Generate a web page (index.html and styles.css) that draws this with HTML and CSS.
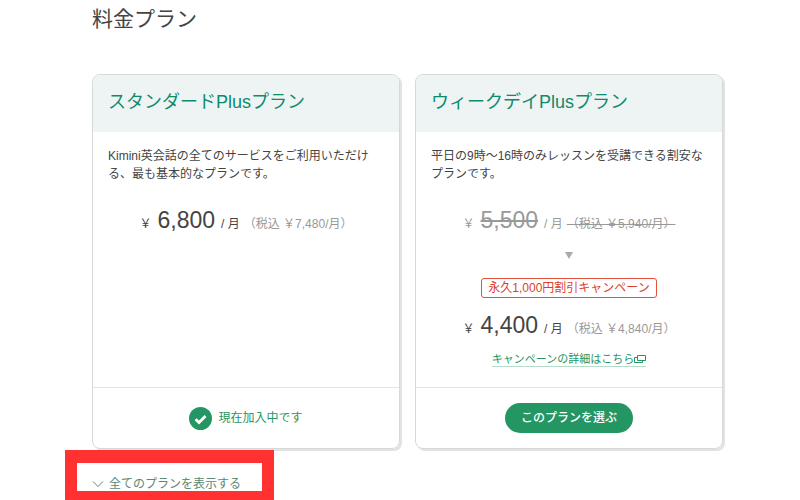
FILE: index.html
```
<!DOCTYPE html>
<html lang="ja">
<head>
    <meta charset="UTF-8">
    <meta name="viewport" content="width=device-width, initial-scale=1.0">
    <title>料金プラン</title>
    <link rel="stylesheet" href="styles.css">
</head>
<body>

<main class="page">
    <h1 class="page-title">料金プラン</h1>

    <div class="plans">
        <!-- Standard Plus -->
        <section class="plan">
            <h2 class="plan-name">スタンダードPlusプラン</h2>
            <div class="plan-body">
                <p class="plan-text">Kimini英会話の全てのサービスをご利用いただける、最も基本的なプランです。</p>
                <p class="price"><span class="yen">￥</span><span class="amount">6,800</span><span class="unit">/ 月</span><span class="tax">（税込 ￥7,480/月）</span></p>
            </div>
            <div class="plan-footer">
                <svg class="check-icon" viewBox="0 0 23 23" aria-hidden="true">
                    <circle cx="11.5" cy="11.5" r="11.5" fill="#249663"/>
                    <path d="M6.6 12.2l3.4 3.3 6.5-6.5" fill="none" stroke="#fff" stroke-width="2.8"/>
                </svg>
                <span class="current">現在加入中です</span>
            </div>
        </section>

        <!-- Weekday Plus -->
        <section class="plan">
            <h2 class="plan-name">ウィークデイPlusプラン</h2>
            <div class="plan-body">
                <p class="plan-text">平日の9時〜16時のみレッスンを受講できる割安なプランです。</p>
                <p class="price price-old"><span class="yen">￥</span><s class="amount">5,500</s><span class="unit">/ 月</span><s class="tax">（税込 ￥5,940/月）</s></p>
                <div class="arrow"></div>
                <p class="campaign">永久1,000円割引キャンペーン</p>
                <p class="price"><span class="yen">￥</span><span class="amount">4,400</span><span class="unit">/ 月</span><span class="tax">（税込 ￥4,840/月）</span></p>
                <a class="detail-link" href="#">キャンペーンの詳細はこちら<svg class="window-icon" viewBox="0 0 12 10" aria-hidden="true">
                        <path d="M3.5 1.5h8v5h-8zM3.5 3.5h-3v5h8v-2" fill="none" stroke="#249663"/>
                    </svg></a>
            </div>
            <div class="plan-footer">
                <button class="select-btn" type="button">このプランを選ぶ</button>
            </div>
        </section>
    </div>

    <div class="show-all">
        <button class="show-all-btn" type="button">
            <svg class="chevron-icon" viewBox="0 0 12 8" aria-hidden="true">
                <path d="M1 1.5l5 5 5-5" fill="none" stroke="#5d8874"/>
            </svg>
            全てのプランを表示する
        </button>
        <div class="highlight"></div>
    </div>
</main>

</body>
</html>
```
FILE: styles.css
```
/* Global Styling */
* {
    box-sizing: border-box;
}

body {
    margin: 0;
    background-color: #fff;
    color: #444;
    font-family: "Liberation Sans", "Noto Sans CJK JP", sans-serif;
    font-size: 12px;
    line-height: 18px;
}

h1, h2, p {
    margin: 0;
    font-weight: normal;
}

button {
    border: none;
    font-family: inherit;
    font-size: 12px;
    line-height: 18px;
    cursor: pointer;
}

.page {
    padding: 4px 77px 7px 92px;
}

.page-title {
    margin-bottom: 40px;
    font-size: 21px;
    line-height: 30px;
}

/* Plan Cards */
.plans {
    display: grid;
    grid-template-columns: 1fr 1fr;
    gap: 15px;
}

.plan {
    display: flex;
    flex-direction: column;
    border: 1px solid #d5dad8;
    border-radius: 8px;
    box-shadow: 2px 2px 0 #e2e2e2;
    overflow: hidden;
}

.plan-name {
    padding: 12px 15px 15px;
    background-color: #eef4f4;
    color: #0f8a6c;
    font-size: 18px;
    line-height: 30px;
}

.plan-body {
    flex: 1;
    display: flex;
    flex-direction: column;
    align-items: center;
    padding: 15px 15px 20px;
}

.plan-text {
    width: 100%;
    margin-bottom: 22px;
}

/* Prices */
.price {
    display: flex;
    align-items: baseline;
    line-height: 30px;
    white-space: nowrap;
}

.amount {
    margin: 0 6px;
    font-size: 23px;
    text-decoration-thickness: 2px;
}

.unit {
    margin-right: 4px;
}

.tax {
    color: #999;
}

.price-old {
    color: #999;
}

.arrow {
    width: 0;
    margin: 13px 0 19px;
    border: 4px solid transparent;
    border-top: 7px solid #aaa;
    border-bottom: none;
}

.campaign {
    margin-bottom: 12px;
    padding: 0 6px;
    border: 1px solid #e0503c;
    border-radius: 3px;
    color: #dc3f28;
}

.detail-link {
    display: flex;
    align-items: center;
    margin-top: 8px;
    border-bottom: 1px solid #b5dccb;
    color: #249663;
    font-size: 11px;
    line-height: 14px;
    text-decoration: none;
}

.window-icon {
    width: 12px;
    height: 10px;
}

/* Card Footer */
.plan-footer {
    display: flex;
    justify-content: center;
    align-items: center;
    gap: 6px;
    height: 61px;
    border-top: 1px solid #e2e6e4;
    color: #249663;
}

.check-icon {
    width: 23px;
    height: 23px;
}

.select-btn {
    padding: 6px 16px;
    border-radius: 15px;
    background-color: #249663;
    color: #fff;
    font-weight: 500;
}

/* Show All */
.show-all {
    position: relative;
    display: flex;
    margin-top: 26px;
}

.show-all-btn {
    display: flex;
    align-items: center;
    gap: 5px;
    padding: 0;
    background: none;
    color: #5d8874;
}

.chevron-icon {
    width: 12px;
    height: 8px;
}

.highlight {
    position: absolute;
    top: -25px;
    left: -27px;
    width: 209px;
    height: 50px;
    border: 12px solid #ff3131;
    border-top-width: 13px;
    border-bottom-width: 9px;
    pointer-events: none;
}
```
